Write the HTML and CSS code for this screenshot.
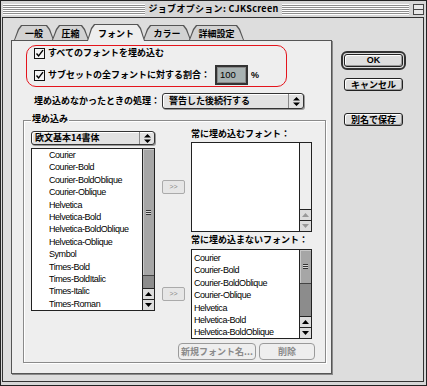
FILE: index.html
```html
<!DOCTYPE html>
<html lang="ja">
<head>
  <meta charset="UTF-8">
  <title>ジョブオプション: CJKScreen</title>
  <link rel="stylesheet" href="styles.css">
</head>
<body>
<div class="window">
  <div class="titlebar">
    <div class="stripes"></div>
    <div class="title">ジョブオプション: CJKScreen</div>
    <div class="title-right">
      <div class="stripes"></div>
      <div class="collapse"></div>
    </div>
  </div>

  <div class="frame">
    <div class="content">
      <div class="tabarea">
        <div class="tabs">
          <div class="tab" style="width: 40px;"><span>一般</span></div>
          <div class="tab" style="width: 37px;"><span>圧縮</span></div>
          <div class="tab active" style="width: 58px;"><span>フォント</span></div>
          <div class="tab" style="width: 48px;"><span>カラー</span></div>
          <div class="tab" style="width: 55px;"><span>詳細設定</span></div>
        </div>

        <div class="panel">
          <div class="highlight">
            <div class="check-row">
              <span class="checkbox"><svg width="9" height="9" viewBox="0 0 9 9"><path d="M1.5 4.5 L3.6 7 L8 1.2" fill="none" stroke="#000" stroke-width="1.4"/></svg></span>
              <span>すべてのフォントを埋め込む</span>
            </div>
            <div class="check-row tall">
              <span class="checkbox"><svg width="9" height="9" viewBox="0 0 9 9"><path d="M1.5 4.5 L3.6 7 L8 1.2" fill="none" stroke="#000" stroke-width="1.4"/></svg></span>
              <span>サブセットの全フォントに対する割合：</span>
              <span class="num"><span class="sel">100</span></span>
              <span class="pct">%</span>
            </div>
          </div>

          <div class="popup-row">
            <span>埋め込めなかったときの処理：</span>
            <div class="popup wide">
              <span class="popup-label">警告した後続行する</span>
              <span class="popup-arrow"><svg width="7" height="9" viewBox="0 0 7 9"><path d="M3.5 0 L7 3.5 H0 Z M3.5 9 L7 5.5 H0 Z" fill="#000"/></svg></span>
            </div>
          </div>

          <div class="group">
            <span class="group-title">埋め込み</span>
            <div class="group-body">
              <div class="left-col">
                <div class="popup">
                  <span class="popup-label">欧文基本14書体</span>
                  <span class="popup-arrow"><svg width="7" height="9" viewBox="0 0 7 9"><path d="M3.5 0 L7 3.5 H0 Z M3.5 9 L7 5.5 H0 Z" fill="#000"/></svg></span>
                </div>
                <div class="list tall-list">
                  <div class="items indent">
                    <div>Courier</div>
                    <div>Courier-Bold</div>
                    <div>Courier-BoldOblique</div>
                    <div>Courier-Oblique</div>
                    <div>Helvetica</div>
                    <div>Helvetica-Bold</div>
                    <div>Helvetica-BoldOblique</div>
                    <div>Helvetica-Oblique</div>
                    <div>Symbol</div>
                    <div>Times-Bold</div>
                    <div>Times-BoldItalic</div>
                    <div>Times-Italic</div>
                    <div>Times-Roman</div>
                  </div>
                  <div class="scrollbar">
                    <div class="thumb" style="height: 127px;"><span class="grip"></span></div>
                    <div class="track"></div>
                    <div class="arrow"><svg width="7" height="4" viewBox="0 0 7 4"><path d="M3.5 0 L7 4 H0 Z" fill="#000"/></svg></div>
                    <div class="arrow"><svg width="7" height="4" viewBox="0 0 7 4"><path d="M0 0 H7 L3.5 4 Z" fill="#000"/></svg></div>
                  </div>
                </div>
              </div>

              <div class="right-area">
                <div class="list-label">常に埋め込むフォント：</div>
                <button class="move first">&gt;&gt;</button>
                <div class="list short-list first">
                  <div class="items"></div>
                  <div class="scrollbar">
                    <div class="track empty"></div>
                    <div class="arrow"><svg width="7" height="4" viewBox="0 0 7 4"><path d="M3.5 0 L7 4 H0 Z" fill="#999"/></svg></div>
                    <div class="arrow"><svg width="7" height="4" viewBox="0 0 7 4"><path d="M0 0 H7 L3.5 4 Z" fill="#999"/></svg></div>
                  </div>
                </div>

                <div class="list-label second">常に埋め込まないフォント：</div>
                <button class="move second">&gt;&gt;</button>
                <div class="list short-list second">
                  <div class="items">
                    <div>Courier</div>
                    <div>Courier-Bold</div>
                    <div>Courier-BoldOblique</div>
                    <div>Courier-Oblique</div>
                    <div>Helvetica</div>
                    <div>Helvetica-Bold</div>
                    <div>Helvetica-BoldOblique</div>
                  </div>
                  <div class="scrollbar">
                    <div class="thumb" style="height: 34px;"><span class="grip"></span></div>
                    <div class="track"></div>
                    <div class="arrow"><svg width="7" height="4" viewBox="0 0 7 4"><path d="M3.5 0 L7 4 H0 Z" fill="#000"/></svg></div>
                    <div class="arrow"><svg width="7" height="4" viewBox="0 0 7 4"><path d="M0 0 H7 L3.5 4 Z" fill="#000"/></svg></div>
                  </div>
                </div>

                <div class="list-buttons">
                  <button class="btn disabled new-font">新規フォント名...</button>
                  <button class="btn disabled remove">削除</button>
                </div>
              </div>
            </div>
          </div>
        </div>
      </div>

      <div class="side">
        <div class="btn-default"><button class="btn ok">OK</button></div>
        <button class="btn cancel">キャンセル</button>
        <button class="btn save">別名で保存</button>
      </div>
    </div>
  </div>
</div>
</body>
</html>
```

FILE: styles.css
```css
body {
  margin: 0;
  font-family: "Noto Sans CJK JP", sans-serif;
  font-size: 9px;
  font-weight: bold;
  line-height: 12px;
  color: #000;
}

.window {
  width: 427px;
  height: 386px;
  box-sizing: border-box;
  border: 1px solid #222;
  background: #d6d6d6;
  display: flex;
  flex-direction: column;
}

/* title bar */
.titlebar {
  height: 16px;
  display: grid;
  grid-template-columns: 1fr auto 1fr;
  align-items: center;
  column-gap: 4px;
  padding: 0 2px 0 2px;
}

.stripes {
  height: 11px;
  background: repeating-linear-gradient(#fff 0 1px, #8e8e8e 1px 2px);
}

.title {
  font-size: 9px;
  letter-spacing: 0.3px;
}

.title-right {
  display: flex;
  align-items: center;
  gap: 4px;
}

.title-right .stripes {
  flex: 1;
}

.collapse {
  width: 11px;
  height: 11px;
  box-sizing: border-box;
  border: 1px solid #444;
  background: linear-gradient(#e8e8e8 0 4px, #444 4px 5px, #e8e8e8 5px);
}

.frame {
  flex: 1;
  display: flex;
  padding: 0 2px 3px 1px;
}

.content {
  flex: 1;
  border: 1px solid #333;
  background: #dddddd;
  display: flex;
  padding: 6px 0 0 8px;
}

/* tabs */
.tabarea {
  width: 321px;
  display: flex;
  flex-direction: column;
}

.tabs {
  display: flex;
  align-items: flex-end;
  padding-left: 3px;
}

.tab {
  position: relative;
  height: 15px;
  margin-right: -2px;
  background: #555;
  display: flex;
  align-items: center;
  justify-content: center;
  clip-path: polygon(0 100%, 4px 4px, 7px 0, calc(100% - 7px) 0, calc(100% - 4px) 4px, 100% 100%);
}

.tab::before {
  content: '';
  position: absolute;
  inset: 1px 1px 0 1px;
  background: #d2d2d2;
  clip-path: polygon(0 100%, 4px 4px, 7px 0, calc(100% - 7px) 0, calc(100% - 4px) 4px, 100% 100%);
}

.tab span {
  position: relative;
  padding-top: 2px;
}

.tab.active {
  height: 17px;
  margin-bottom: -1px;
  z-index: 2;
}

.tab.active::before {
  background: #eeeeee;
  bottom: 0;
}

.panel {
  height: 334px;
  box-sizing: border-box;
  border: 1px solid #555;
  background: #eeeeee;
  box-shadow: 1px 1px 0 #8a8a8a;
}

/* checkboxes */
.highlight {
  margin: 4px 0 0 14px;
  width: 261px;
  height: 42px;
  box-sizing: border-box;
  border: 1px solid #e4141c;
  border-radius: 10px;
  padding: 1px 0 0 7px;
  display: flex;
  flex-direction: column;
  gap: 5px;
}

.check-row {
  height: 12px;
  display: flex;
  align-items: center;
}

.check-row.tall {
  height: 22px;
}

.checkbox {
  width: 11px;
  height: 11px;
  box-sizing: border-box;
  border: 1px solid #111;
  background: #f4f4f4;
  margin-right: 3px;
  display: flex;
  align-items: center;
  justify-content: center;
}

.num {
  width: 33px;
  height: 20px;
  box-sizing: border-box;
  margin-left: 5px;
  border: 2px solid #333;
  padding: 1px;
  background: #fff;
  box-shadow: inset 0 0 0 1px #888;
  display: flex;
}

.sel {
  flex: 1;
  background: #a8b2b2;
  font-family: "Liberation Sans", Arial, sans-serif;
  font-size: 9.5px;
  font-weight: normal;
  line-height: 14px;
  padding-left: 2px;
}

.pct {
  margin-left: 3px;
  font-family: "Liberation Sans", Arial, sans-serif;
}

/* popup menus */
.popup-row {
  margin: 6px 0 0 22px;
  height: 16px;
  display: flex;
  align-items: center;
}

.popup {
  height: 14px;
  box-sizing: border-box;
  display: flex;
  border: 1px solid #333;
  border-radius: 3px;
  background: #e2e2e2;
  box-shadow: inset 1px 1px 0 #fff, 1px 1px 0 #999;
}

.popup.wide {
  width: 142px;
  height: 16px;
  margin-left: 2px;
}

.popup-label {
  flex: 1;
  padding-left: 3px;
  display: flex;
  align-items: center;
}

.popup.wide .popup-label {
  padding-left: 6px;
}

.popup-arrow {
  width: 14px;
  border-left: 1px solid #888;
  display: flex;
  align-items: center;
  justify-content: center;
}

/* group box */
.group {
  position: relative;
  margin: 11px 0 0 11px;
  width: 303px;
  height: 243px;
  box-sizing: border-box;
  border: 1px solid #8a8a8a;
  box-shadow: inset 1px 1px 0 #fff, 1px 1px 0 #fff;
}

.group-title {
  position: absolute;
  top: -8px;
  left: 7px;
  padding: 0 1px;
  background: #eeeeee;
}

.group-body {
  display: flex;
  padding: 10px 0 0 7px;
}

.left-col {
  width: 124px;
  display: flex;
  flex-direction: column;
  gap: 3px;
}

.right-area {
  margin: -3px 0 0 7px;
  display: grid;
  grid-template-columns: 23px 121px;
  grid-template-rows: 14px 90px 17px 90px auto;
  column-gap: 6px;
}

.list-label {
  grid-column: 2;
  grid-row: 1;
  white-space: nowrap;
}

.list-label.second {
  grid-row: 3;
  padding-top: 2px;
}

.move {
  grid-column: 1;
  grid-row: 2;
  align-self: center;
  height: 14px;
  margin: 0;
  padding: 0;
  border: 1px solid #aaa;
  border-radius: 2px;
  background: #e6e6e6;
  color: #8a8a8a;
  font-family: "Liberation Sans", Arial, sans-serif;
  font-size: 7px;
  line-height: 12px;
}

.move.second {
  grid-row: 4;
}

/* lists */
.list {
  box-sizing: border-box;
  border: 1px solid #222;
  background: #fff;
  display: flex;
}

.tall-list {
  height: 163px;
}

.short-list {
  grid-column: 2;
  grid-row: 2;
}

.short-list.second {
  grid-row: 4;
}

.items {
  flex: 1;
  font-family: "Liberation Sans", Arial, sans-serif;
  font-size: 9px;
  font-weight: normal;
  letter-spacing: -0.45px;
  line-height: 12.4px;
  padding: 2px 0 0 2px;
  white-space: nowrap;
  overflow: hidden;
}

.items.indent {
  padding: 0 0 0 17px;
}

.scrollbar {
  width: 11px;
  border-left: 1px solid #222;
  display: flex;
  flex-direction: column;
}

.thumb {
  box-sizing: border-box;
  background: #a6a6a6;
  border-bottom: 1px solid #444;
  box-shadow: inset 1px 1px 0 #c8c8c8;
  display: flex;
  align-items: center;
  justify-content: center;
}

.grip {
  width: 5px;
  height: 5px;
  background: repeating-linear-gradient(#333 0 1px, #d8d8d8 1px 2px);
}

.track {
  flex: 1;
  background: #8c8c8c;
}

.track.empty {
  background: #eeeeee;
}

.arrow {
  height: 11px;
  box-sizing: border-box;
  border-top: 1px solid #222;
  background: #dddddd;
  display: flex;
  align-items: center;
  justify-content: center;
}

/* buttons */
.btn {
  margin: 0;
  padding: 0;
  box-sizing: border-box;
  border: 1px solid #222;
  border-radius: 3px;
  background: #dedede;
  box-shadow: inset 1px 1px 0 #fff, inset -1px -1px 0 #999;
  font-family: "Noto Sans CJK JP", sans-serif;
  font-size: 9px;
  font-weight: bold;
  line-height: 11px;
  color: #000;
}

.list-buttons {
  grid-column: 1 / 3;
  grid-row: 5;
  margin: 4px -3px 0 0;
  display: flex;
  justify-content: flex-end;
  gap: 3px;
}

.btn.disabled {
  height: 17px;
  border-color: #9a9a9a;
  border-radius: 4px;
  background: #eeeeee;
  box-shadow: none;
  color: #8a8a8a;
}

.new-font {
  width: 78px;
}

.remove {
  width: 56px;
}

.side {
  width: 65px;
  margin-left: 9px;
  padding-top: 27px;
  display: flex;
  flex-direction: column;
  align-items: center;
}

.btn-default {
  width: 65px;
  height: 19px;
  box-sizing: border-box;
  border: 2px solid #333;
  border-radius: 6px;
  padding: 1px;
  display: flex;
}

.btn.ok {
  flex: 1;
  font-family: "Liberation Sans", Arial, sans-serif;
}

.btn.cancel,
.btn.save {
  width: 59px;
  height: 13px;
}

.btn.cancel {
  margin-top: 8px;
}

.btn.save {
  margin-top: 22px;
}
```
